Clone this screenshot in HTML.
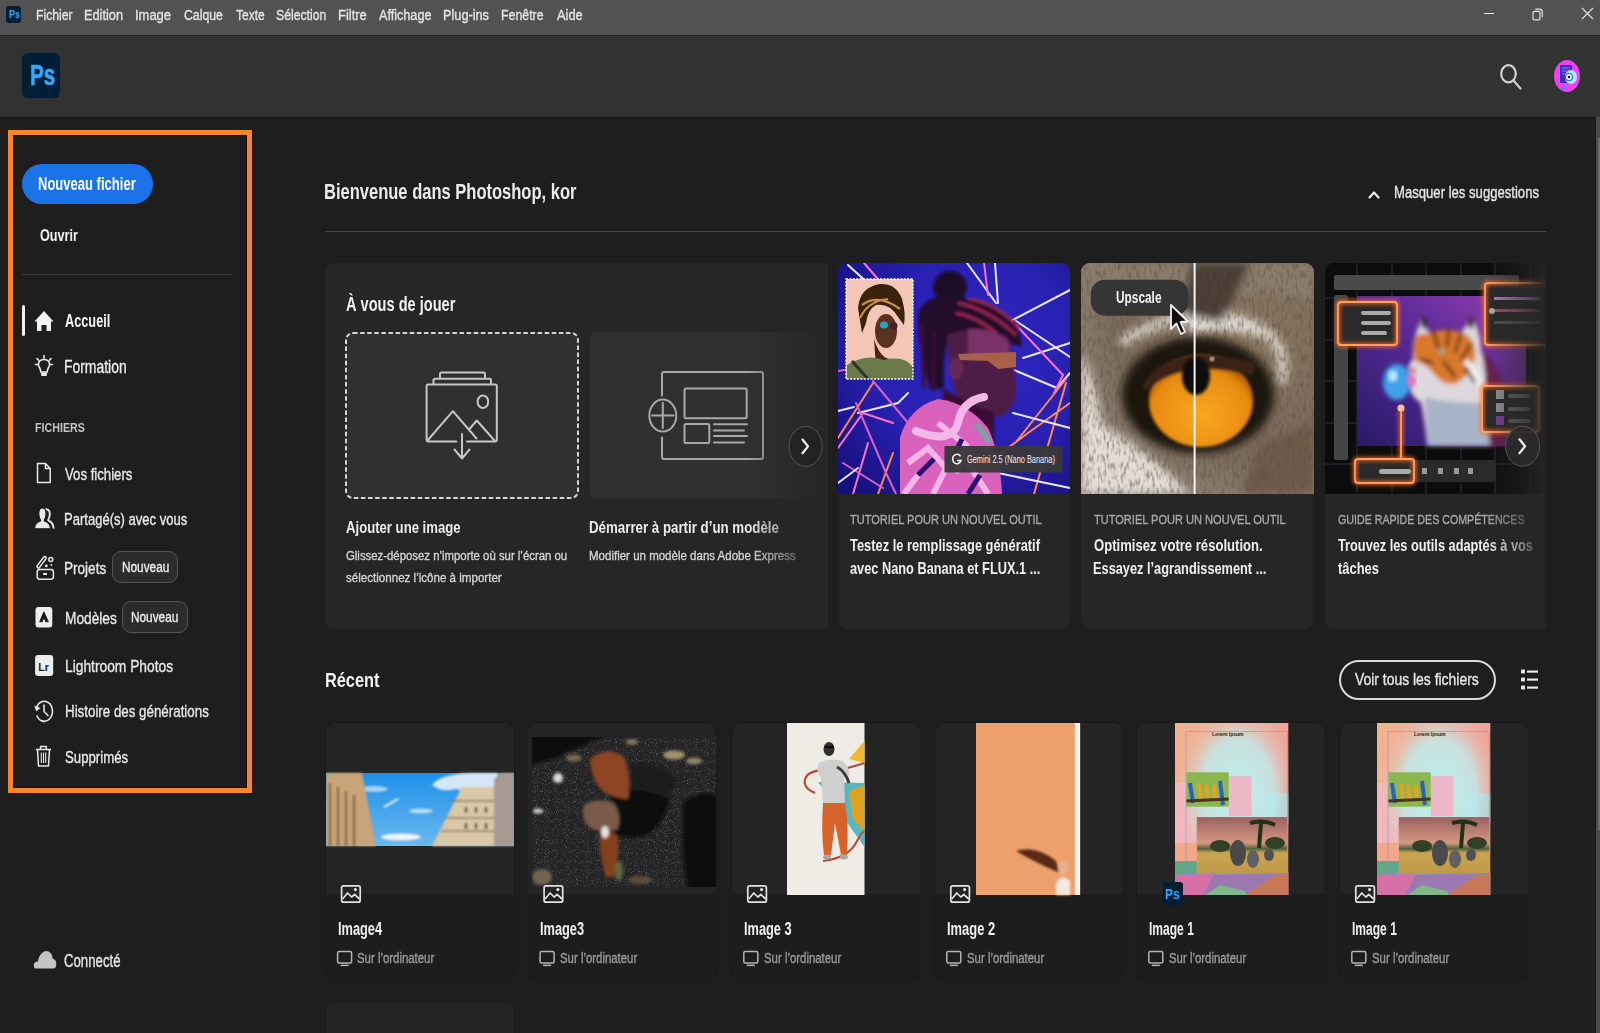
<!DOCTYPE html>
<html><head><meta charset="utf-8">
<style>
html,body{margin:0;padding:0;}
body{width:1600px;height:1033px;overflow:hidden;position:relative;background:#1e1e1e;font-family:"Liberation Sans",sans-serif;}
.a{position:absolute;}
.t{position:absolute;white-space:nowrap;line-height:1;transform-origin:0 0;}
svg{position:absolute;overflow:visible;}
</style></head><body>
<!-- title bar -->
<div class="a" style="left:0;top:0;width:1600px;height:35px;background:#525252"></div>
<div class="a" style="left:0;top:35px;width:1600px;height:1px;background:#232323"></div>
<!-- header -->
<div class="a" style="left:0;top:36px;width:1600px;height:81px;background:#323232"></div>
<div class="a" style="left:0;top:117px;width:1600px;height:1px;background:#1a1a1a"></div>
<!-- small ps icon -->
<div class="a" style="left:6px;top:6px;width:15px;height:17px;background:#001e36;border-radius:3px"></div>
<div class="a" style="left:8.6px;top:10px;font:bold 10px 'Liberation Sans';color:#31a8ff;line-height:1;transform:scaleX(.9);transform-origin:0 0">Ps</div>
<!-- window controls -->
<div class="a" style="left:1483.5px;top:13px;width:10.5px;height:1.2px;background:#e8e8e8"></div>
<svg style="left:0;top:0" width="1600" height="34"><g fill="none" stroke="#e0e0e0" stroke-width="1.2">
<rect x="1533" y="11.3" width="7" height="8.6" rx="1.3"/><path d="M1535.3 9.2 H1539.5 Q1542.3 9.2 1542.3 12 V17.2"/>
<path d="M1582 8 L1593 19 M1593 8 L1582 19"/></g></svg>
<!-- big ps logo -->
<div class="a" style="left:22px;top:53px;width:38px;height:45px;background:#001e36;border-radius:6px"></div>
<div class="a" style="left:29.5px;top:61px;font:bold 29px 'Liberation Sans';color:#31a8ff;line-height:1;transform:scaleX(.71);transform-origin:0 0;-webkit-text-stroke:.6px #31a8ff">Ps</div>
<!-- search -->
<svg style="left:0;top:0" width="1600" height="117"><g fill="none" stroke="#d2d2d2" stroke-width="2.2" stroke-linecap="round">
<ellipse cx="1508.5" cy="73.8" rx="7.3" ry="8.6"/><path d="M1513.5 80.5 L1520.5 88.5"/></g></svg>
<svg style="left:0;top:0" width="1600" height="117">
<ellipse cx="1567" cy="76" rx="13" ry="16" fill="#f040f0"/>
<rect x="1560" y="65" width="12" height="18" rx="1" fill="#3a30c0"/>
<g stroke="#8a80ff" stroke-width="1"><path d="M1562 68h8M1562 71h7M1562 74h6"/></g>
<ellipse cx="1571" cy="77" rx="6" ry="7" fill="#b0e8ff"/>
<ellipse cx="1569" cy="77" rx="3.5" ry="3.5" fill="#fff" stroke="#2a6ad0" stroke-width="1.2"/>
<circle cx="1569" cy="77" r="1.3" fill="#101040"/>
<path d="M1565 85 L1563 90" stroke="#3090ff" stroke-width="2.5"/>
</svg>
<!-- sidebar orange box -->
<div class="a" style="left:8px;top:130px;width:234px;height:653px;border:5px solid #f7862b;background:#1e1e1e;box-shadow:inset 0 0 0 1px #1a0c08"></div>
<div class="a" style="left:22px;top:164px;width:131px;height:40px;background:#1a73e8;border-radius:20px"></div>
<div class="a" style="left:22px;top:274px;width:210px;height:1px;background:#3b3b3b"></div>
<div class="a" style="left:22px;top:305px;width:3px;height:31px;background:#f0f0f0;border-radius:2px"></div>
<!-- badges -->
<div class="a" style="left:112px;top:551px;width:64px;height:31px;background:#2c2c2c;border:1px solid #555;border-radius:9px;box-sizing:border-box;width:66px;height:32px"></div>
<div class="a" style="left:122px;top:601px;width:66px;height:32px;background:#2c2c2c;border:1px solid #555;border-radius:9px;box-sizing:border-box"></div>
<svg style="left:0;top:0" width="260" height="1033">
<!-- home -->
<path d="M34.5 321.5 L44 311 L53.5 321.5 L51 321.5 L51 331 L46.5 331 L46.5 325 L41.5 325 L41.5 331 L37 331 L37 321.5 Z" fill="#f4f4f4"/>
<!-- bulb -->
<g fill="none" stroke="#ececec" stroke-width="1.6" stroke-linecap="round">
<path d="M44 355.5 v2.5 M37 358.5 l1.6 1.8 M51 358.5 l-1.6 1.8 M35.5 364.5 h2.5 M50 364.5 h2.5"/>
<path d="M40.8 372 Q40.5 369 39.5 367.5 Q38 365.5 38.5 363.5 Q39.5 359.5 44 359.5 Q48.5 359.5 49.5 363.5 Q50 365.5 48.5 367.5 Q47.5 369 47.2 372 Z"/>
</g>
<rect x="41" y="372.5" width="6" height="3.5" rx="1.2" fill="#ececec"/>
<!-- file -->
<path d="M37.5 463.5 H45.5 L50.2 468.5 V482.5 H37.5 Z M45.5 463.5 V468.5 H50.2" fill="none" stroke="#e8e8e8" stroke-width="1.5" stroke-linejoin="round"/>
<!-- people -->
<path d="M46 509.2 Q49.8 509.5 49.8 514 Q49.8 517.5 48.2 519.8 L48.4 520.6 Q53.2 522.5 53.5 527.8" fill="none" stroke="#e8e8e8" stroke-width="1.9" stroke-linecap="round"/>
<path d="M42.4 508 Q46 508 46 513.8 Q46 517.8 44.3 520 V521 Q50.3 522.3 50.4 528.8 H34.6 Q34.8 522.3 40.5 521 V520 Q38.8 517.8 38.8 513.8 Q38.8 508 42.4 508 Z" fill="#e8e8e8" stroke="#1e1e1e" stroke-width="1.1"/>
<!-- projets -->
<g fill="none" stroke="#e8e8e8" stroke-width="1.5" stroke-linejoin="round">
<rect x="37.2" y="569.6" width="16.2" height="9.6" rx="2.4"/>
<path d="M37.3 565.6 L43.6 557.2 Q44.6 556 45.7 556.9 Q46.6 557.8 45.8 559 L39.5 567.4 Q38.5 568.5 37.5 567.6 Q36.6 566.8 37.3 565.6 Z"/>
<circle cx="50.8" cy="559.5" r="2"/>
</g>
<rect x="43.1" y="573" width="3.9" height="2" fill="#e8e8e8"/>
<circle cx="46.3" cy="565.9" r="1.4" fill="#e8e8e8"/>
<circle cx="51.4" cy="565" r="0.9" fill="#e8e8e8"/>
<!-- modeles -->
<rect x="35.5" y="607.1" width="16.8" height="20.3" rx="3" fill="#ececec"/>
<path d="M39.6 621.8 L43.9 611.8 L48.4 621.8 L45.7 621.8 L43.9 617.4 L42.2 621.8 Z" fill="#141414" stroke="#141414" stroke-width="0.8" stroke-linejoin="round"/>
<!-- lr -->
<rect x="35.1" y="655.1" width="18.1" height="20.9" rx="3" fill="#ececec"/>
<text x="38.3" y="670.5" font-family="Liberation Sans" font-weight="bold" font-size="10.5" fill="#1a1a1a">Lr</text>
<!-- history -->
<g fill="none" stroke="#e8e8e8" stroke-width="1.6" stroke-linecap="round" stroke-linejoin="round">
<path d="M36.5 708 A8.2 10 0 1 1 37 716"/>
<path d="M44 705 V711.5 L48 715.5"/>
</g>
<path d="M34.2 705.5 L36.2 711.2 L40.5 708 Z" fill="#e8e8e8"/>
<!-- trash -->
<g fill="none" stroke="#e8e8e8" stroke-width="1.5" stroke-linejoin="round">
<path d="M35.8 749.5 H51.1 M40.5 749.5 V746.5 H46.4 V749.5"/>
<path d="M37.5 749.5 L38.5 766 H48.5 L49.5 749.5"/>
<path d="M41.3 752.5 V763 M43.5 752.5 V763 M45.7 752.5 V763" stroke-width="1.1"/>
</g>
<!-- cloud -->
<path d="M36 968.6 Q33.8 968.6 33.8 965.5 Q33.8 961.5 38 961.5 Q38.5 956 42 953 Q45 950.2 48.5 951.5 Q52.5 953.5 52.5 958.5 Q56.3 959.5 56.3 964 Q56.3 968.6 53 968.6 Z" fill="#c4c4c4"/>
</svg>
<!-- main header -->
<div class="a" style="left:325px;top:231px;width:1221px;height:1px;background:#444"></div>
<svg style="left:0;top:0" width="1600" height="300"><path d="M1369.5 197.5 L1374 192.5 L1378.5 197.5" fill="none" stroke="#eee" stroke-width="2.2" stroke-linecap="round" stroke-linejoin="round"/></svg>
<!-- cards row -->
<div class="a" style="left:325px;top:263px;width:503px;height:366px;background:#262626;border-radius:9px"></div>
<div class="a" style="left:345px;top:332px;width:234px;height:167px;background:#303030;border-radius:7px"></div>
<svg style="left:0;top:0" width="1600" height="600"><rect x="346" y="333" width="232" height="165" rx="7" fill="none" stroke="#d6d6d6" stroke-width="2" stroke-dasharray="4.5 2.6"/></svg>
<div class="a" style="left:590px;top:332px;width:237px;height:167px;background:#303030;border-radius:7px 0 0 7px"></div>
<svg style="left:0;top:0" width="1600" height="600">
<g fill="none" stroke="#c6c6c6" stroke-width="2" stroke-linecap="round" stroke-linejoin="round">
<path d="M440 377.5 V374 Q440 372.5 441.5 372.5 H483.5 Q485 372.5 485 374 V377.5"/>
<path d="M433.5 384 V380 Q433.5 378.7 435 378.7 H489.5 Q491 378.7 491 380 V384"/>
<path d="M456.4 441.4 H428 Q426.6 441.4 426.6 440 V386 Q426.6 384.6 428 384.6 H495.4 Q496.8 384.6 496.8 386 V440 Q496.8 441.4 495.4 441.4 H467"/>
<ellipse cx="482.9" cy="401.7" rx="5.3" ry="6.3"/>
<path d="M427.5 440.5 L452.9 411.2 L476.5 438.5 M469 429.5 L476.8 420.5 L494.5 440.5"/>
<path d="M462 434 V458.5 M454.5 449.5 L462 458.5 L469.5 449.5"/>
</g>
<g fill="none" stroke="#a8a8a8" stroke-width="2" stroke-linecap="round" stroke-linejoin="round">
<path d="M662 395.5 V374 Q662 372 664 372 H761 Q763 372 763 374 V457 Q763 459 761 459 H664 Q662 459 662 457 V437.5"/>
<ellipse cx="662.8" cy="415.6" rx="13.5" ry="16"/>
<path d="M662.8 403 V428 M652 415.6 H673.6"/>
<rect x="684.5" y="388.6" width="62.2" height="29.6" rx="1.5"/>
<rect x="684.5" y="424" width="24.8" height="19" rx="1.5"/>
<path d="M714 424.3 H747 M714 430.4 H744 M714 436.1 H747 M714 442.6 H744"/>
</g>
</svg>
<div class="a" style="left:838px;top:263px;width:232px;height:366px;background:#262626;border-radius:9px;overflow:hidden"><div class="a" style="left:0;top:0;width:240px;height:231px;overflow:hidden"><svg style="left:0;top:0" width="232" height="231" viewBox="0 0 232 231">
<defs>
<radialGradient id="bl1" cx="0.6" cy="0.4" r="0.8"><stop offset="0" stop-color="#3028c4"/><stop offset="0.55" stop-color="#2820b0"/><stop offset="1" stop-color="#16107a"/></radialGradient>
<filter id="b1" x="-10%" y="-10%" width="120%" height="120%"><feGaussianBlur stdDeviation="0.7"/></filter>
<filter id="b2" x="-20%" y="-20%" width="140%" height="140%"><feGaussianBlur stdDeviation="1.8"/></filter>
<clipPath id="c1"><rect width="232" height="231"/></clipPath>
</defs>
<g clip-path="url(#c1)">
<rect width="232" height="231" fill="url(#bl1)"/>
<g fill="none" stroke-width="2" stroke-linecap="round" filter="url(#b1)">
<path d="M10 2 L32 22 M129 0 L158 40 M157 0 L160 40 M169 60 L232 27 M178 58 L232 94 M176 107 L219 125 L232 110 M185 95 L232 80 M0 148 L16 144 M20 150 L60 140 L70 130" stroke="#eae6ff"/>
<path d="M26 0 L52 30 M146 0 L150 32 M178 62 L225 112 L216 130 M0 185 L25 150 L55 160 M15 231 L30 180" stroke="#ff70d0"/>
<path d="M178 179 L228 116 M196 231 L228 120 M150 200 L190 170 L232 140 M0 175 L35 120 M40 231 L55 190" stroke="#ff8a50"/>
<path d="M18 140 L48 210 L58 231 M35 118 L95 190 M0 108 L26 104 M5 200 L45 225" stroke="#d860c8"/>
<path d="M175 150 L232 165 M160 210 L232 225 M0 220 L20 205" stroke="#e8e4ff"/>
</g>
<!-- inset portrait -->
<rect x="8" y="16" width="67" height="100" fill="#f3c6b6"/>
<g filter="url(#b1)">
<path d="M20 45 Q22 24 42 21 Q58 20 64 36 Q68 50 66 62 L60 54 Q52 40 38 42 Q30 46 28 60 L24 70 Z" fill="#3a2410"/>
<path d="M24 42 Q40 30 62 46 M22 55 Q30 38 50 36" stroke="#c89040" stroke-width="2.2" fill="none"/>
<ellipse cx="48" cy="68" rx="11" ry="17" fill="#5a3020"/>
<path d="M36 76 Q42 95 52 96 L58 102 L38 104 Z" fill="#4a2818"/>
<path d="M9 116 L9 102 Q28 90 46 97 Q66 92 75 104 L75 116 Z" fill="#6a7a48"/>
<path d="M14 98 L30 116" stroke="#303028" stroke-width="3"/>
<ellipse cx="46" cy="62" rx="4" ry="3.6" fill="#20a8c0"/><ellipse cx="56" cy="63" rx="3.5" ry="3.4" fill="#402030"/>
</g>
<rect x="8" y="16" width="67" height="100" fill="none" stroke="#fff" stroke-width="1.4" stroke-dasharray="2 1.4"/>
<!-- main person -->
<g filter="url(#b2)">
<ellipse cx="112" cy="24" rx="17" ry="16" fill="#1e0828"/>
<path d="M80 50 Q90 30 115 34 Q150 36 175 60 Q185 72 183 84 L170 80 Q150 70 130 70 L112 72 Q104 90 106 125 L92 126 Q80 90 80 50 Z" fill="#24082c"/>
<path d="M120 40 Q150 46 178 72 M118 50 Q148 56 172 84 M130 36 Q160 40 182 66" stroke="#9a2850" stroke-width="3" fill="none"/>
<path d="M84 60 L86 125 M96 70 L95 128" stroke="#3a0c38" stroke-width="4"/>
<path d="M109 72 Q140 60 170 74 L176 100 L178 128 Q176 150 160 154 L130 150 Q112 135 109 72 Z" fill="#4e1a46"/>
<path d="M130 66 Q155 64 170 78 L172 95 L130 92 Z" fill="#7a3068"/>
<ellipse cx="118" cy="106" rx="7" ry="11" fill="#6a2858"/>
<path d="M104 125 Q130 140 156 150 L156 185 L110 185 Z" fill="#3a1034"/>
</g>
<g filter="url(#b1)">
<path d="M120 91 L178 89 L178 104 L160 106 L150 98 L122 97 Z" fill="#a86048"/>
<path d="M62 231 L62 175 Q70 145 100 136 Q130 140 150 165 Q162 190 164 231 Z" fill="#d862bc"/>
<path d="M70 200 L90 185 L108 205 L95 231 M100 160 L128 182 L118 210 M130 200 L150 231 M66 231 L80 212" stroke="#f8b6e8" stroke-width="6" fill="none"/>
<path d="M80 212 L96 196 M124 176 L114 196 M142 212 L130 231" stroke="#2a1070" stroke-width="5" fill="none"/>
<path d="M138 161 L152 179" stroke="#80a0a0" stroke-width="6"/>
<path d="M146 134 Q124 138 120 160 Q114 182 78 168" stroke="#f2b8e8" stroke-width="8" fill="none" stroke-linecap="round"/>
</g>
<!-- gemini badge -->
<rect x="106.5" y="183" width="118" height="26.5" fill="#383838" fill-opacity=".95"/>
<path d="M122.6 193.4 A4.3 4.8 0 1 0 123 197.6 L119.2 197.6" fill="none" stroke="#fff" stroke-width="1.5"/>
<text font-family="Liberation Sans" font-size="10" fill="#f0f0f0" transform="translate(129 200) scale(.74 1)">Gemini 2.5 (Nano Banana)</text>
</g>
</svg></div></div>
<div class="a" style="left:1081px;top:263px;width:233px;height:366px;background:#262626;border-radius:9px;overflow:hidden"><div class="a" style="left:0;top:0;width:240px;height:231px;overflow:hidden"><svg style="left:0;top:0" width="233" height="231" viewBox="0 0 233 231">
<defs>
<radialGradient id="fur" cx="0.7" cy="0.3" r="0.9"><stop offset="0" stop-color="#8a7660"/><stop offset="0.6" stop-color="#7a6a5a"/><stop offset="1" stop-color="#9a8e82"/></radialGradient>
<radialGradient id="iris" cx="0.5" cy="0.65" r="0.6"><stop offset="0" stop-color="#f8a820"/><stop offset="0.8" stop-color="#e88a10"/><stop offset="1" stop-color="#a05008"/></radialGradient>
<filter id="e1"><feGaussianBlur stdDeviation="4"/></filter>
<filter id="e2"><feGaussianBlur stdDeviation="1.5"/></filter>
<filter id="furn" x="0" y="0" width="100%" height="100%"><feTurbulence type="fractalNoise" baseFrequency="0.35 0.12" numOctaves="2" seed="7"/><feColorMatrix values="0 0 0 0 0.1  0 0 0 0 0.08  0 0 0 0 0.06  0 0 0 3 -1.4"/></filter>
</defs>
<rect width="233" height="231" fill="url(#fur)"/>
<g filter="url(#e1)">
<path d="M0 90 Q20 120 30 231 L0 231 Z" fill="#ddd6cc"/>
<path d="M0 150 Q60 180 110 231 L0 231 Z" fill="#e2dcd4"/>
<path d="M100 50 Q160 40 210 90 Q170 60 110 70 Z" fill="#e8e4e0"/>
<path d="M40 80 Q100 40 170 60 Q210 80 200 120" stroke="#d8d0c8" stroke-width="10" fill="none"/>
<path d="M0 0 L233 0 L233 40 Q150 20 80 40 L0 30 Z" fill="#8a7c6c"/>
<path d="M180 180 L233 160 L233 231 L160 231 Z" fill="#6e5a48"/>
<path d="M110 0 L170 0 L140 60 L100 50 Z" fill="#4a3e34"/>
</g>
<rect width="233" height="231" filter="url(#furn)" opacity=".5"/>
<ellipse cx="117" cy="132" rx="76" ry="58" fill="#1a1410" filter="url(#e1)"/>
<ellipse cx="120" cy="138" rx="52" ry="46" fill="url(#iris)" filter="url(#e2)"/>
<path d="M62 122 Q90 76 172 100 Q175 108 170 112 Q140 104 118 106 Q85 108 64 128 Z" fill="#3a2216" filter="url(#e2)"/>
<ellipse cx="115" cy="113" rx="14" ry="19" fill="#0a0808" filter="url(#e2)"/>
<circle cx="131" cy="96" r="2" fill="#fff" filter="url(#e2)"/>
<rect x="112.6" y="0" width="2" height="231" fill="#f4f4f4"/>
<rect x="9.8" y="16.7" width="97.6" height="36" rx="14" fill="#353535"/>
<path d="M90 42 L90 66 L95.5 60.5 L100 71 L104 69 L99.5 59 L107 58.5 Z" fill="#101010" stroke="#f4f4f4" stroke-width="1.8" stroke-linejoin="round"/>
</svg></div></div>
<div class="a" style="left:1325px;top:263px;width:221px;height:366px;background:#262626;border-radius:9px 0 0 9px;overflow:hidden"><div class="a" style="left:0;top:0;width:240px;height:231px;overflow:hidden"><svg style="left:0;top:0" width="221" height="231" viewBox="0 0 221 231">
<defs>
<linearGradient id="pur" x1="0" y1="1" x2="1" y2="0"><stop offset="0" stop-color="#281a68"/><stop offset="0.55" stop-color="#5a2a98"/><stop offset="1" stop-color="#9a40b0"/></linearGradient>
<filter id="t1"><feGaussianBlur stdDeviation="2"/></filter>
<filter id="glow" x="-30%" y="-30%" width="160%" height="160%"><feGaussianBlur stdDeviation="2.2"/></filter>
</defs>
<rect width="221" height="231" fill="#0c0c0c"/>
<g stroke="#2e2e3a" stroke-width="1">
<path d="M32 0V231 M67 0V231 M101 0V231 M136 0V231 M170 0V231 M205 0V231 M0 35H221 M0 77H221 M0 118H221 M0 160H221 M0 201H221"/>
</g>
<rect x="9" y="12" width="185" height="15" rx="2" fill="#4a4a4a"/>
<rect x="9" y="32" width="14" height="165" rx="2" fill="#454545"/>
<rect x="32" y="33" width="169" height="150" fill="url(#pur)"/>
<g filter="url(#t1)">
<path d="M140 80 Q172 90 180 130 L185 183 L150 183 Z" fill="#6a2050"/>
<path d="M96 57 L106 72 Q122 66 136 70 L147 55 Q156 68 156 88 Q162 110 160 135 L165 183 L102 183 Q100 160 96 140 Q84 132 82 118 Q80 104 88 96 Q86 80 96 57 Z" fill="#dcd8dc"/>
<path d="M92 72 L104 70 Q122 64 138 70 Q152 76 150 96 Q146 112 132 120 Q120 124 110 112 Q100 100 90 98 Q86 84 92 72 Z" fill="#d8782c"/>
<path d="M100 134 Q120 140 160 140 L165 183 L102 183 Z" fill="#a8b4c8"/>
<path d="M140 98 Q156 110 158 140" stroke="#f0f0f0" stroke-width="6" fill="none"/>
<path d="M108 68 L114 86 M124 65 L122 84 M136 70 L130 90 M146 80 L136 98 M118 98 L130 114 M140 104 L150 120 M96 96 L108 100" stroke="#141010" stroke-width="2.4"/>
<ellipse cx="99" cy="60" rx="3" ry="6" fill="#3a2a2a"/><ellipse cx="146" cy="60" rx="3" ry="6" fill="#3a2a2a"/>
<circle cx="116" cy="88" r="2.6" fill="#60c0a0"/>
<ellipse cx="87" cy="108" rx="4" ry="4" fill="#e07090"/>
</g>
<ellipse cx="72" cy="119" rx="14" ry="18" fill="#40a0e8" filter="url(#t1)"/>
<ellipse cx="68" cy="113" rx="5" ry="6" fill="#c0e8ff" filter="url(#t1)"/>
<ellipse cx="86" cy="118" rx="5" ry="6" fill="#e070c0" filter="url(#t1)"/>
<!-- panels -->
<rect x="14" y="40" width="57" height="41" rx="2" fill="#2a2a2a"/>
<rect x="160" y="22" width="61" height="60" rx="2" fill="#2a2a2a"/>
<rect x="158" y="124" width="55" height="44" rx="2" fill="#2a2a2a"/>
<rect x="31" y="197" width="140" height="22" rx="2" fill="#2a2a2a"/>
<g fill="#aaa"><rect x="36" y="48" width="30" height="4" rx="2"/><rect x="36" y="58" width="30" height="4" rx="2"/><rect x="36" y="68" width="26" height="4" rx="2"/>
<rect x="54" y="206" width="32" height="5" rx="2.5"/></g>
<g fill="#666"><rect x="169" y="34" width="46" height="3" fill="#b080c0"/><rect x="169" y="46" width="46" height="3" fill="#a05070"/><rect x="169" y="58" width="46" height="3" fill="#555"/>
<rect x="183" y="131" width="22" height="4" rx="2"/><rect x="183" y="144" width="22" height="4" rx="2"/><rect x="183" y="156" width="22" height="4" rx="2"/></g>
<g fill="#999"><rect x="171" y="127" width="8" height="9"/><rect x="171" y="140" width="8" height="9"/><rect x="171" y="153" width="8" height="9" fill="#8040a0"/>
<rect x="97" y="205" width="5" height="6"/><rect x="113" y="205" width="5" height="6"/><rect x="129" y="205" width="5" height="6"/><rect x="143" y="205" width="5" height="6"/></g>
<g fill="none" stroke="#ff6a20" stroke-width="4" filter="url(#glow)" opacity=".9">
<rect x="13" y="39" width="59" height="43" rx="3"/><rect x="160" y="20" width="70" height="62" rx="3"/><rect x="157" y="123" width="57" height="46" rx="3"/><rect x="30" y="196" width="59" height="24" rx="3"/>
<path d="M76 145 L76 196"/>
</g>
<g fill="none" stroke="#ffa060" stroke-width="1.8">
<rect x="13" y="39" width="59" height="43" rx="3"/><rect x="160" y="20" width="70" height="62" rx="3"/><rect x="157" y="123" width="57" height="46" rx="3"/><rect x="30" y="196" width="59" height="24" rx="3"/>
<path d="M76 145 L76 196"/>
</g>
<circle cx="76" cy="145" r="3.5" fill="#ffc0a0"/>
<circle cx="167" cy="48" r="3" fill="#b0b0b0"/>
</svg></div></div>
<!-- recent -->
<div class="a" style="left:1339px;top:660px;width:157px;height:40px;border:2px solid #dadada;border-radius:21px;box-sizing:border-box"></div>
<svg style="left:0;top:0" width="1600" height="1033"><g fill="#e8e8e8">
<rect x="1521" y="669.5" width="4" height="4" rx=".8"/><rect x="1527" y="670.5" width="11" height="2.2"/>
<rect x="1521" y="677.5" width="4" height="4" rx=".8"/><rect x="1527" y="678.5" width="11" height="2.2"/>
<rect x="1521" y="685.5" width="4" height="4" rx=".8"/><rect x="1527" y="686.5" width="11" height="2.2"/></g></svg>
<div class="a" style="left:325.6px;top:722.5px;width:188px;height:257px;border-radius:9px;overflow:hidden;background:#1d1d1d;box-shadow:0 0 0 1px #1a1a1a"><div class="a" style="left:0;top:0;width:188px;height:171.5px;background:#242424"></div><svg style="left:0;top:50.3px" width="188" height="73" viewBox="0 0 188 73" preserveAspectRatio="none">
<defs><linearGradient id="sky" x1="0" y1="0" x2="0" y2="1"><stop offset="0" stop-color="#1e90e8"/><stop offset="1" stop-color="#6ab8ee"/></linearGradient>
<filter id="sb"><feGaussianBlur stdDeviation="1"/></filter></defs>
<rect width="188" height="73" fill="url(#sky)"/>
<g filter="url(#sb)">
<path d="M106 12 Q115 0 150 0 L172 0 L168 18 Q150 22 130 16 Q115 20 106 12 Z" fill="#e8f0f8" opacity=".9"/>
<ellipse cx="75" cy="64" rx="20" ry="3.5" fill="#f0f4f8"/>
<ellipse cx="48" cy="16" rx="14" ry="3" fill="#c8e0f4" opacity=".8"/>
<path d="M58 34 L72 26" stroke="#fff" stroke-width="2"/>
<ellipse cx="95" cy="38" rx="12" ry="2.5" fill="#d0e8f8" opacity=".8"/>
<path d="M0 0 H36 L40 20 L50 73 H0 Z" fill="#c8a478"/>
<path d="M4 10 V73 M12 14 V73 M20 18 V73 M28 22 V73" stroke="#8a6a48" stroke-width="2.5"/>
<path d="M106 73 L136 14 H175 V73 Z" fill="#dac8a6"/>
<path d="M125 28 H172 M120 45 H172 M115 58 H172" stroke="#8a7a60" stroke-width="1.5"/>
<path d="M140 34 V40 M150 34 V40 M160 34 V40 M140 50 V56 M150 50 V56 M160 50 V56" stroke="#605040" stroke-width="2.5"/>
<path d="M168 6 L175 0 H188 V73 H168 Z" fill="#a89a92"/>
</g></svg></div><svg style="left:0;top:0" width="1600" height="1033"><g fill="none" stroke="#e2e2e2" stroke-width="1.7" stroke-linejoin="round">
<rect x="341.6" y="885.8" width="18.6" height="16.4" rx="2"/><path d="M342.6 899 L347.6 893 L351.6 897 L354.6 894.5 L359.6 899"/></g>
<circle cx="355.4" cy="889.6" r="1.6" fill="#e2e2e2"/></svg><svg style="left:0;top:0" width="1600" height="1033"><g fill="none" stroke="#b4b4b4" stroke-width="1.5">
<rect x="337.6" y="951.5" width="14" height="11.5" rx="1.5"/></g><rect x="340.6" y="964.6" width="8" height="1.5" fill="#b4b4b4"/></svg><div class="a" style="left:528.1px;top:722.5px;width:188px;height:257px;border-radius:9px;overflow:hidden;background:#1d1d1d;box-shadow:0 0 0 1px #1a1a1a"><div class="a" style="left:0;top:0;width:188px;height:171.5px;background:#242424"></div><svg style="left:3.9px;top:14.5px" width="185" height="150" viewBox="0 0 185 150" preserveAspectRatio="none">
<defs><filter id="qb" x="-20%" y="-20%" width="140%" height="140%"><feGaussianBlur stdDeviation="1.5"/></filter>
<filter id="noise" x="0" y="0" width="100%" height="100%"><feTurbulence type="fractalNoise" baseFrequency="0.9" numOctaves="1" seed="3"/><feColorMatrix values="0 0 0 0 1  0 0 0 0 1  0 0 0 0 1  0 0 0 2.2 -1.25"/></filter>
<clipPath id="qc"><rect width="185" height="150"/></clipPath></defs>
<g clip-path="url(#qc)">
<rect width="185" height="150" fill="#242426"/>
<rect width="185" height="150" filter="url(#noise)" opacity=".6"/>
<g filter="url(#qb)">
<path d="M-5 -5 H80 Q50 10 20 22 L-5 30 Z" fill="#0c0c0e"/>
<path d="M152 64 Q175 50 190 62 V155 H156 Q148 110 152 64 Z" fill="#0c0c0c"/>
<path d="M98 26 Q130 24 146 42 Q140 60 128 66 L100 60 Z" fill="#18181a" opacity=".8"/>
<path d="M80 54 Q110 50 138 62 Q134 82 118 96 Q100 104 84 98 Q78 76 80 54 Z" fill="#0e0e10"/>
<path d="M58 22 Q75 8 92 20 Q100 40 96 62 Q85 62 72 55 Q60 45 58 22 Z" fill="#8e4424"/>
<path d="M52 68 Q65 60 82 66 Q90 78 86 92 Q76 96 60 92 Q48 84 52 68 Z" fill="#7a5a48"/>
<path d="M68 92 Q78 92 86 100 Q88 120 82 140 L74 140 Q66 115 68 92 Z" fill="#84401e"/>
<ellipse cx="73" cy="95" rx="4" ry="6" fill="#e8e4e0"/>
<ellipse cx="142" cy="18" rx="11" ry="4.5" fill="#b8a478" opacity=".85"/><ellipse cx="162" cy="24" rx="8" ry="3.5" fill="#a89a78" opacity=".8"/>
<ellipse cx="42" cy="21" rx="8" ry="3.5" fill="#8a7a58" opacity=".8"/>
<ellipse cx="10" cy="140" rx="10" ry="8" fill="#7a6e58" opacity=".85"/>
<ellipse cx="108" cy="143" rx="12" ry="4" fill="#5a4e3c"/>
<ellipse cx="87" cy="134" rx="4" ry="10" fill="#5a6a40"/>
<ellipse cx="26" cy="41" rx="5" ry="5" fill="#d8d8d8"/>
<ellipse cx="6" cy="74" rx="5" ry="2.5" fill="#d0d0d0"/>
<ellipse cx="100" cy="5" rx="6" ry="3" fill="#a08a60" opacity=".8"/>
</g></g></svg></div><svg style="left:0;top:0" width="1600" height="1033"><g fill="none" stroke="#e2e2e2" stroke-width="1.7" stroke-linejoin="round">
<rect x="544.1" y="885.8" width="18.6" height="16.4" rx="2"/><path d="M545.1 899 L550.1 893 L554.1 897 L557.1 894.5 L562.1 899"/></g>
<circle cx="557.9" cy="889.6" r="1.6" fill="#e2e2e2"/></svg><svg style="left:0;top:0" width="1600" height="1033"><g fill="none" stroke="#b4b4b4" stroke-width="1.5">
<rect x="540.1" y="951.5" width="14" height="11.5" rx="1.5"/></g><rect x="543.1" y="964.6" width="8" height="1.5" fill="#b4b4b4"/></svg><div class="a" style="left:731.8px;top:722.5px;width:188px;height:257px;border-radius:9px;overflow:hidden;background:#1d1d1d;box-shadow:0 0 0 1px #1a1a1a"><div class="a" style="left:0;top:0;width:188px;height:171.5px;background:#242424"></div><svg style="left:55.5px;top:0" width="77.5" height="172" viewBox="0 0 77.5 172" preserveAspectRatio="none">
<defs><filter id="mb" x="-20%" y="-20%" width="140%" height="140%"><feGaussianBlur stdDeviation="0.6"/></filter></defs>
<rect width="77.5" height="172" fill="#efece6"/>
<g filter="url(#mb)">
<path d="M62 36 L77.5 18 V40 Z" fill="#f0b830"/>
<path d="M31 59 L77.5 60 V124 Z" fill="#58b8c0"/>
<path d="M62 68 L77.5 62 V108 L66 96 Z" fill="#e0a020"/>
<path d="M44 47 Q24 46 19 54 Q14 64 28 70" stroke="#b84838" stroke-width="2.2" fill="none"/>
<path d="M52 47 Q62 45 77.5 40" stroke="#b84838" stroke-width="2.2" fill="none"/>
<path d="M36 138 Q62 135 70 118 Q74 110 77.5 108" stroke="#b84838" stroke-width="2" fill="none"/>
<ellipse cx="42" cy="26" rx="5.5" ry="7" fill="#2e2e2e"/>
<path d="M38 24 H47" stroke="#111" stroke-width="2"/>
<path d="M32 40 Q42 34 56 38 Q64 46 62 54 L57 52 L58 80 H36 L34 54 Q28 48 32 40 Z" fill="#cfcfcf"/>
<path d="M50 44 Q58 48 62 60" stroke="#3a3a3a" stroke-width="3" fill="none"/>
<path d="M36 80 H58 Q62 100 60 132 H54 L48 100 L44 132 H37 Q34 110 36 80 Z" fill="#d8642a"/>
<ellipse cx="40" cy="134" rx="4" ry="2.5" fill="#a8a8a8"/><ellipse cx="57" cy="134" rx="4" ry="2.5" fill="#a8a8a8"/>
</g></svg></div><svg style="left:0;top:0" width="1600" height="1033"><g fill="none" stroke="#e2e2e2" stroke-width="1.7" stroke-linejoin="round">
<rect x="747.8" y="885.8" width="18.6" height="16.4" rx="2"/><path d="M748.8 899 L753.8 893 L757.8 897 L760.8 894.5 L765.8 899"/></g>
<circle cx="761.6" cy="889.6" r="1.6" fill="#e2e2e2"/></svg><svg style="left:0;top:0" width="1600" height="1033"><g fill="none" stroke="#b4b4b4" stroke-width="1.5">
<rect x="743.8" y="951.5" width="14" height="11.5" rx="1.5"/></g><rect x="746.8" y="964.6" width="8" height="1.5" fill="#b4b4b4"/></svg><div class="a" style="left:934.8px;top:722.5px;width:188px;height:257px;border-radius:9px;overflow:hidden;background:#1d1d1d;box-shadow:0 0 0 1px #1a1a1a"><div class="a" style="left:0;top:0;width:188px;height:171.5px;background:#242424"></div><svg style="left:41.4px;top:0" width="104.1" height="172" viewBox="0 0 104.1 172" preserveAspectRatio="none">
<defs><filter id="ob"><feGaussianBlur stdDeviation="1"/></filter></defs>
<rect width="104.1" height="172" fill="#eea06c"/>
<rect x="98.8" width="5.3" height="172" fill="#f8f4f0"/>
<g filter="url(#ob)">
<path d="M40 128 Q60 122 80 138 L84 150 Q60 140 40 128 Z" fill="#5a2a18"/>
<ellipse cx="87" cy="145" rx="5" ry="7" fill="#e8b090"/>
<path d="M80 160 Q86 150 94 158 L94 172 H80 Z" fill="#f4e8e0"/>
</g></svg></div><svg style="left:0;top:0" width="1600" height="1033"><g fill="none" stroke="#e2e2e2" stroke-width="1.7" stroke-linejoin="round">
<rect x="950.8" y="885.8" width="18.6" height="16.4" rx="2"/><path d="M951.8 899 L956.8 893 L960.8 897 L963.8 894.5 L968.8 899"/></g>
<circle cx="964.6" cy="889.6" r="1.6" fill="#e2e2e2"/></svg><svg style="left:0;top:0" width="1600" height="1033"><g fill="none" stroke="#b4b4b4" stroke-width="1.5">
<rect x="946.8" y="951.5" width="14" height="11.5" rx="1.5"/></g><rect x="949.8" y="964.6" width="8" height="1.5" fill="#b4b4b4"/></svg><div class="a" style="left:1136.8px;top:722.5px;width:188px;height:257px;border-radius:9px;overflow:hidden;background:#1d1d1d;box-shadow:0 0 0 1px #1a1a1a"><div class="a" style="left:0;top:0;width:188px;height:171.5px;background:#242424"></div><svg style="left:37.9px;top:0" width="113.3" height="172" viewBox="0 0 113.3 172" preserveAspectRatio="none">
<defs><linearGradient id="cg379" x1="0" y1="0" x2="1" y2="0.6"><stop offset="0" stop-color="#f2b48c"/><stop offset="0.6" stop-color="#f0a8a0"/><stop offset="1" stop-color="#f09a90"/></linearGradient>
<radialGradient id="cr379" cx="0.55" cy="0.42" r="0.55"><stop offset="0" stop-color="#b8f4f0"/><stop offset="0.6" stop-color="#c0ecec" stop-opacity=".8"/><stop offset="1" stop-color="#f0b8a0" stop-opacity="0"/></radialGradient>
<linearGradient id="ce379" x1="0" y1="0" x2="0" y2="1"><stop offset="0" stop-color="#9a6060"/><stop offset="0.45" stop-color="#d49880"/><stop offset="0.55" stop-color="#506040"/><stop offset="0.62" stop-color="#c8a450"/><stop offset="1" stop-color="#c09848"/></linearGradient>
<filter id="cb379" x="-10%" y="-10%" width="120%" height="120%"><feGaussianBlur stdDeviation="0.7"/></filter></defs>
<rect width="113.3" height="172" fill="url(#cg379)"/>
<rect x="88" y="70" width="25.3" height="30" fill="#90e0f0" opacity=".8"/>
<rect x="0" y="60" width="20" height="60" fill="#f4b8c8" opacity=".8"/>
<rect width="113.3" height="172" fill="url(#cr379)"/>
<rect x="53.7" y="53.2" width="22.7" height="40" fill="#f2b0c4" opacity=".9"/>
<g filter="url(#cb379)">
<rect x="11.3" y="49.3" width="42.4" height="34.4" fill="#8ab850"/>
<path d="M15 60 L18 80 M45 58 L48 82" stroke="#2a60c0" stroke-width="4"/>
<path d="M24 60 L26 76 M31 62 L33 78 M39 62 L40 77" stroke="#e8a020" stroke-width="4"/>
<path d="M11.3 78 L53.7 76" stroke="#4a3020" stroke-width="3"/>
<rect x="21.8" y="94.1" width="90.6" height="57.6" fill="url(#ce379)"/>
<path d="M75 100 Q88 96 100 102 M86 100 L84 125" stroke="#203018" stroke-width="4" fill="none"/>
<ellipse cx="45" cy="123" rx="10" ry="6" fill="#304028"/>
<ellipse cx="100" cy="120" rx="10" ry="6" fill="#304028"/>
<ellipse cx="63" cy="130" rx="8" ry="13" fill="#48484c"/>
<ellipse cx="78" cy="136" rx="6" ry="9" fill="#606064"/>
<ellipse cx="94" cy="132" rx="5" ry="6" fill="#505054"/>
<rect x="0" y="120" width="21.8" height="18" fill="#f0a888"/>
<rect x="0" y="138" width="21.8" height="16" fill="#60a888"/>
<path d="M0 152 L113.3 150 V172 H0 Z" fill="#9a78b0"/>
<path d="M0 152 L40 150 L28 172 H0 Z" fill="#d870a8"/>
<path d="M70 172 L100 152 L113.3 150 V172 Z" fill="#c87858"/>
<path d="M30 172 L45 162 L70 168 L72 172 Z" fill="#80b888"/>
</g>
<text x="37" y="12.8" font-family="Liberation Sans" font-weight="bold" font-size="5.6" fill="#222" transform="translate(37 0) scale(.9 1) translate(-37 0)">Lorem Ipsum</text>
<rect x="11" y="8.7" width="101.5" height="143" fill="none" stroke="#9090c8" stroke-width=".6"/>
</svg></div><div class="a" style="left:1163.4px;top:882.2px;width:20px;height:23px;background:#001e36;border-radius:3px"></div><div class="t" style="left:1165.4px;top:886.5px;font-size:14px;font-weight:bold;color:#31a8ff;transform:scaleX(.85)">Ps</div><svg style="left:0;top:0" width="1600" height="1033"><g fill="none" stroke="#b4b4b4" stroke-width="1.5">
<rect x="1148.8" y="951.5" width="14" height="11.5" rx="1.5"/></g><rect x="1151.8" y="964.6" width="8" height="1.5" fill="#b4b4b4"/></svg><div class="a" style="left:1339.8px;top:722.5px;width:188px;height:257px;border-radius:9px;overflow:hidden;background:#1d1d1d;box-shadow:0 0 0 1px #1a1a1a"><div class="a" style="left:0;top:0;width:188px;height:171.5px;background:#242424"></div><svg style="left:37.1px;top:0" width="113.3" height="172" viewBox="0 0 113.3 172" preserveAspectRatio="none">
<defs><linearGradient id="cg371" x1="0" y1="0" x2="1" y2="0.6"><stop offset="0" stop-color="#f2b48c"/><stop offset="0.6" stop-color="#f0a8a0"/><stop offset="1" stop-color="#f09a90"/></linearGradient>
<radialGradient id="cr371" cx="0.55" cy="0.42" r="0.55"><stop offset="0" stop-color="#b8f4f0"/><stop offset="0.6" stop-color="#c0ecec" stop-opacity=".8"/><stop offset="1" stop-color="#f0b8a0" stop-opacity="0"/></radialGradient>
<linearGradient id="ce371" x1="0" y1="0" x2="0" y2="1"><stop offset="0" stop-color="#9a6060"/><stop offset="0.45" stop-color="#d49880"/><stop offset="0.55" stop-color="#506040"/><stop offset="0.62" stop-color="#c8a450"/><stop offset="1" stop-color="#c09848"/></linearGradient>
<filter id="cb371" x="-10%" y="-10%" width="120%" height="120%"><feGaussianBlur stdDeviation="0.7"/></filter></defs>
<rect width="113.3" height="172" fill="url(#cg371)"/>
<rect x="88" y="70" width="25.3" height="30" fill="#90e0f0" opacity=".8"/>
<rect x="0" y="60" width="20" height="60" fill="#f4b8c8" opacity=".8"/>
<rect width="113.3" height="172" fill="url(#cr371)"/>
<rect x="53.7" y="53.2" width="22.7" height="40" fill="#f2b0c4" opacity=".9"/>
<g filter="url(#cb371)">
<rect x="11.3" y="49.3" width="42.4" height="34.4" fill="#8ab850"/>
<path d="M15 60 L18 80 M45 58 L48 82" stroke="#2a60c0" stroke-width="4"/>
<path d="M24 60 L26 76 M31 62 L33 78 M39 62 L40 77" stroke="#e8a020" stroke-width="4"/>
<path d="M11.3 78 L53.7 76" stroke="#4a3020" stroke-width="3"/>
<rect x="21.8" y="94.1" width="90.6" height="57.6" fill="url(#ce371)"/>
<path d="M75 100 Q88 96 100 102 M86 100 L84 125" stroke="#203018" stroke-width="4" fill="none"/>
<ellipse cx="45" cy="123" rx="10" ry="6" fill="#304028"/>
<ellipse cx="100" cy="120" rx="10" ry="6" fill="#304028"/>
<ellipse cx="63" cy="130" rx="8" ry="13" fill="#48484c"/>
<ellipse cx="78" cy="136" rx="6" ry="9" fill="#606064"/>
<ellipse cx="94" cy="132" rx="5" ry="6" fill="#505054"/>
<rect x="0" y="120" width="21.8" height="18" fill="#f0a888"/>
<rect x="0" y="138" width="21.8" height="16" fill="#60a888"/>
<path d="M0 152 L113.3 150 V172 H0 Z" fill="#9a78b0"/>
<path d="M0 152 L40 150 L28 172 H0 Z" fill="#d870a8"/>
<path d="M70 172 L100 152 L113.3 150 V172 Z" fill="#c87858"/>
<path d="M30 172 L45 162 L70 168 L72 172 Z" fill="#80b888"/>
</g>
<text x="37" y="12.8" font-family="Liberation Sans" font-weight="bold" font-size="5.6" fill="#222" transform="translate(37 0) scale(.9 1) translate(-37 0)">Lorem Ipsum</text>
<rect x="11" y="8.7" width="101.5" height="143" fill="none" stroke="#9090c8" stroke-width=".6"/>
</svg></div><svg style="left:0;top:0" width="1600" height="1033"><g fill="none" stroke="#e2e2e2" stroke-width="1.7" stroke-linejoin="round">
<rect x="1355.8" y="885.8" width="18.6" height="16.4" rx="2"/><path d="M1356.8 899 L1361.8 893 L1365.8 897 L1368.8 894.5 L1373.8 899"/></g>
<circle cx="1369.6" cy="889.6" r="1.6" fill="#e2e2e2"/></svg><svg style="left:0;top:0" width="1600" height="1033"><g fill="none" stroke="#b4b4b4" stroke-width="1.5">
<rect x="1351.8" y="951.5" width="14" height="11.5" rx="1.5"/></g><rect x="1354.8" y="964.6" width="8" height="1.5" fill="#b4b4b4"/></svg>
<div class="a" style="left:326px;top:1002px;width:188px;height:40px;background:#232323;border-radius:8px;box-shadow:0 0 0 1px #191919"></div>
<!-- scrollbar -->
<div class="a" style="left:1595px;top:117px;width:1px;height:916px;background:#181818"></div><div class="a" style="left:1596px;top:117px;width:4px;height:916px;background:#4a4a4a"></div><div class="a" style="left:1598px;top:138px;width:2px;height:692px;background:#6c6c6c"></div>
<div class="t" style="left:36.11px;top:6.82px;font-size:15.36px;font-weight:normal;color:#e4e4e4;transform:scaleX(0.7916);-webkit-text-stroke:.35px #e4e4e4">Fichier</div>
<div class="t" style="left:84.47px;top:6.82px;font-size:15.36px;font-weight:normal;color:#e4e4e4;transform:scaleX(0.8300);-webkit-text-stroke:.35px #e4e4e4">Edition</div>
<div class="t" style="left:135.46px;top:6.82px;font-size:15.36px;font-weight:normal;color:#e4e4e4;transform:scaleX(0.8433);-webkit-text-stroke:.35px #e4e4e4">Image</div>
<div class="t" style="left:183.50px;top:6.82px;font-size:15.36px;font-weight:normal;color:#e4e4e4;transform:scaleX(0.7999);-webkit-text-stroke:.35px #e4e4e4">Calque</div>
<div class="t" style="left:235.60px;top:6.82px;font-size:15.36px;font-weight:normal;color:#e4e4e4;transform:scaleX(0.7797);-webkit-text-stroke:.35px #e4e4e4">Texte</div>
<div class="t" style="left:276.20px;top:6.82px;font-size:15.36px;font-weight:normal;color:#e4e4e4;transform:scaleX(0.7950);-webkit-text-stroke:.35px #e4e4e4">Sélection</div>
<div class="t" style="left:338.16px;top:6.82px;font-size:15.36px;font-weight:normal;color:#e4e4e4;transform:scaleX(0.8438);-webkit-text-stroke:.35px #e4e4e4">Filtre</div>
<div class="t" style="left:379.30px;top:6.82px;font-size:15.36px;font-weight:normal;color:#e4e4e4;transform:scaleX(0.8225);-webkit-text-stroke:.35px #e4e4e4">Affichage</div>
<div class="t" style="left:443.47px;top:6.82px;font-size:15.36px;font-weight:normal;color:#e4e4e4;transform:scaleX(0.8283);-webkit-text-stroke:.35px #e4e4e4">Plug-ins</div>
<div class="t" style="left:501.20px;top:6.82px;font-size:15.36px;font-weight:normal;color:#e4e4e4;transform:scaleX(0.8036);-webkit-text-stroke:.35px #e4e4e4">Fenêtre</div>
<div class="t" style="left:556.70px;top:6.82px;font-size:15.36px;font-weight:normal;color:#e4e4e4;transform:scaleX(0.8345);-webkit-text-stroke:.35px #e4e4e4">Aide</div>
<div class="t" style="left:37.96px;top:176.25px;font-size:17.5px;font-weight:bold;color:#ffffff;transform:scaleX(0.7442)">Nouveau fichier</div>
<div class="t" style="left:39.80px;top:226.97px;font-size:17.07px;font-weight:bold;color:#f2f2f2;transform:scaleX(0.7408)">Ouvrir</div>
<div class="t" style="left:64.50px;top:311.71px;font-size:18.78px;font-weight:bold;color:#f4f4f4;transform:scaleX(0.6790)">Accueil</div>
<div class="t" style="left:64.24px;top:358.19px;font-size:18.21px;font-weight:normal;color:#ececec;transform:scaleX(0.7648);-webkit-text-stroke:.35px #ececec">Formation</div>
<div class="t" style="left:34.80px;top:420.58px;font-size:13.23px;font-weight:bold;color:#c4c4c4;transform:scaleX(0.8081)">FICHIERS</div>
<div class="t" style="left:65.00px;top:465.76px;font-size:17.07px;font-weight:normal;color:#e8e8e8;transform:scaleX(0.7727);-webkit-text-stroke:.35px #e8e8e8">Vos fichiers</div>
<div class="t" style="left:64.24px;top:511.46px;font-size:17.07px;font-weight:normal;color:#e8e8e8;transform:scaleX(0.7640);-webkit-text-stroke:.35px #e8e8e8">Partagé(s) avec vous</div>
<div class="t" style="left:64.21px;top:559.57px;font-size:17.07px;font-weight:normal;color:#e8e8e8;transform:scaleX(0.7950);-webkit-text-stroke:.35px #e8e8e8">Projets</div>
<div class="t" style="left:121.75px;top:560.63px;font-size:13.94px;font-weight:normal;color:#ececec;transform:scaleX(0.8475);-webkit-text-stroke:.35px #ececec">Nouveau</div>
<div class="t" style="left:64.60px;top:609.67px;font-size:17.07px;font-weight:normal;color:#e8e8e8;transform:scaleX(0.8037);-webkit-text-stroke:.35px #e8e8e8">Modèles</div>
<div class="t" style="left:131.35px;top:610.63px;font-size:13.94px;font-weight:normal;color:#ececec;transform:scaleX(0.8475);-webkit-text-stroke:.35px #ececec">Nouveau</div>
<div class="t" style="left:64.59px;top:657.67px;font-size:17.07px;font-weight:normal;color:#e8e8e8;transform:scaleX(0.8079);-webkit-text-stroke:.35px #e8e8e8">Lightroom Photos</div>
<div class="t" style="left:64.62px;top:702.97px;font-size:17.07px;font-weight:normal;color:#e8e8e8;transform:scaleX(0.7815);-webkit-text-stroke:.35px #e8e8e8">Histoire des générations</div>
<div class="t" style="left:65.40px;top:749.07px;font-size:17.07px;font-weight:normal;color:#e8e8e8;transform:scaleX(0.7738);-webkit-text-stroke:.35px #e8e8e8">Supprimés</div>
<div class="t" style="left:64.20px;top:952.25px;font-size:18.49px;font-weight:normal;color:#e4e4e4;transform:scaleX(0.7140);-webkit-text-stroke:.35px #e4e4e4">Connecté</div>
<div class="t" style="left:324.43px;top:182.13px;font-size:21.34px;font-weight:bold;color:#ebebeb;transform:scaleX(0.7745)">Bienvenue dans Photoshop, kor</div>
<div class="t" style="left:1393.96px;top:184.25px;font-size:16.5px;font-weight:normal;color:#e6e6e6;transform:scaleX(0.7944);-webkit-text-stroke:.35px #e6e6e6">Masquer les suggestions</div>
<div class="t" style="left:345.50px;top:295.05px;font-size:19.91px;font-weight:bold;color:#f0f0f0;transform:scaleX(0.7321)">À vous de jouer</div>
<div class="t" style="left:345.50px;top:518.52px;font-size:16.36px;font-weight:bold;color:#ececec;transform:scaleX(0.8029)">Ajouter une image</div>
<div class="t" style="left:345.50px;top:548.52px;font-size:13.37px;font-weight:normal;color:#d4d4d4;transform:scaleX(0.8508);-webkit-text-stroke:.35px #d4d4d4">Glissez-déposez n’importe où sur l’écran ou</div>
<div class="t" style="left:345.50px;top:571.02px;font-size:13.37px;font-weight:normal;color:#d4d4d4;transform:scaleX(0.8666);-webkit-text-stroke:.35px #d4d4d4">sélectionnez l’icône à importer</div>
<div class="t" style="left:588.89px;top:518.52px;font-size:16.36px;font-weight:bold;color:#ececec;transform:scaleX(0.8129)">Démarrer à partir d’un modèle</div>
<div class="t" style="left:588.84px;top:548.52px;font-size:13.37px;font-weight:normal;color:#d4d4d4;transform:scaleX(0.8615);-webkit-text-stroke:.35px #d4d4d4">Modifier un modèle dans Adobe Express</div>
<div class="t" style="left:850.30px;top:512.87px;font-size:13.66px;font-weight:normal;color:#a8a8a8;transform:scaleX(0.8091);-webkit-text-stroke:.35px #a8a8a8">TUTORIEL POUR UN NOUVEL OUTIL</div>
<div class="t" style="left:850.30px;top:536.83px;font-size:17.35px;font-weight:bold;color:#f0f0f0;transform:scaleX(0.7417)">Testez le remplissage génératif</div>
<div class="t" style="left:850.30px;top:559.53px;font-size:17.35px;font-weight:bold;color:#f0f0f0;transform:scaleX(0.7367)">avec Nano Banana et FLUX.1 ...</div>
<div class="t" style="left:1094.00px;top:512.87px;font-size:13.66px;font-weight:normal;color:#a8a8a8;transform:scaleX(0.8091);-webkit-text-stroke:.35px #a8a8a8">TUTORIEL POUR UN NOUVEL OUTIL</div>
<div class="t" style="left:1094.00px;top:536.83px;font-size:17.35px;font-weight:bold;color:#f0f0f0;transform:scaleX(0.7542)">Optimisez votre résolution.</div>
<div class="t" style="left:1093.26px;top:559.53px;font-size:17.35px;font-weight:bold;color:#f0f0f0;transform:scaleX(0.7369)">Essayez l’agrandissement ...</div>
<div class="t" style="left:1337.60px;top:512.87px;font-size:13.66px;font-weight:normal;color:#a8a8a8;transform:scaleX(0.7802);-webkit-text-stroke:.35px #a8a8a8">GUIDE RAPIDE DES COMPÉTENCES</div>
<div class="t" style="left:1337.60px;top:536.83px;font-size:17.35px;font-weight:bold;color:#f0f0f0;transform:scaleX(0.7352)">Trouvez les outils adaptés à vos</div>
<div class="t" style="left:1337.60px;top:559.53px;font-size:17.35px;font-weight:bold;color:#f0f0f0;transform:scaleX(0.7439)">tâches</div>
<div class="t" style="left:1116.30px;top:289.68px;font-size:15.65px;font-weight:bold;color:#f4f4f4;transform:scaleX(0.7580)">Upscale</div>
<div class="t" style="left:324.52px;top:669.84px;font-size:20.91px;font-weight:bold;color:#f2f2f2;transform:scaleX(0.7811)">Récent</div>
<div class="t" style="left:1354.70px;top:671.17px;font-size:17.07px;font-weight:normal;color:#e8e8e8;transform:scaleX(0.8155);-webkit-text-stroke:.35px #e8e8e8">Voir tous les fichiers</div>
<div class="t" style="left:337.59px;top:920.64px;font-size:17.92px;font-weight:bold;color:#f0f0f0;transform:scaleX(0.7144)">Image4</div>
<div class="t" style="left:357.30px;top:950.46px;font-size:15.08px;font-weight:normal;color:#9c9c9c;transform:scaleX(0.7552);-webkit-text-stroke:.35px #9c9c9c">Sur l’ordinateur</div>
<div class="t" style="left:540.09px;top:920.64px;font-size:17.92px;font-weight:bold;color:#f0f0f0;transform:scaleX(0.7144)">Image3</div>
<div class="t" style="left:559.80px;top:950.46px;font-size:15.08px;font-weight:normal;color:#9c9c9c;transform:scaleX(0.7552);-webkit-text-stroke:.35px #9c9c9c">Sur l’ordinateur</div>
<div class="t" style="left:743.79px;top:920.64px;font-size:17.92px;font-weight:bold;color:#f0f0f0;transform:scaleX(0.7136)">Image 3</div>
<div class="t" style="left:763.50px;top:950.46px;font-size:15.08px;font-weight:normal;color:#9c9c9c;transform:scaleX(0.7552);-webkit-text-stroke:.35px #9c9c9c">Sur l’ordinateur</div>
<div class="t" style="left:946.78px;top:920.64px;font-size:17.92px;font-weight:bold;color:#f0f0f0;transform:scaleX(0.7212)">Image 2</div>
<div class="t" style="left:966.50px;top:950.46px;font-size:15.08px;font-weight:normal;color:#9c9c9c;transform:scaleX(0.7552);-webkit-text-stroke:.35px #9c9c9c">Sur l’ordinateur</div>
<div class="t" style="left:1148.83px;top:920.64px;font-size:17.92px;font-weight:bold;color:#f0f0f0;transform:scaleX(0.6725)">Image 1</div>
<div class="t" style="left:1168.50px;top:950.46px;font-size:15.08px;font-weight:normal;color:#9c9c9c;transform:scaleX(0.7552);-webkit-text-stroke:.35px #9c9c9c">Sur l’ordinateur</div>
<div class="t" style="left:1351.83px;top:920.64px;font-size:17.92px;font-weight:bold;color:#f0f0f0;transform:scaleX(0.6725)">Image 1</div>
<div class="t" style="left:1371.50px;top:950.46px;font-size:15.08px;font-weight:normal;color:#9c9c9c;transform:scaleX(0.7552);-webkit-text-stroke:.35px #9c9c9c">Sur l’ordinateur</div>

<div class="a" style="left:745px;top:263px;width:83px;height:366px;background:linear-gradient(to right,rgba(38,38,38,0),rgba(38,38,38,.4) 45%,rgba(38,38,38,.85) 80%,rgba(38,38,38,1) 100%)"></div>
<div class="a" style="left:1485px;top:263px;width:61px;height:366px;background:linear-gradient(to right,rgba(38,38,38,0),rgba(38,38,38,.5) 60%,rgba(38,38,38,.95) 100%)"></div>
<svg style="left:0;top:0" width="1600" height="600">
<ellipse cx="805.6" cy="446.4" rx="16.5" ry="20" fill="#222" fill-opacity=".9" stroke="#555" stroke-width="1"/>
<path d="M802.5 439.5 L808 446.4 L802.5 453.3" fill="none" stroke="#f0f0f0" stroke-width="2.2" stroke-linecap="round" stroke-linejoin="round"/>
<ellipse cx="1522.6" cy="446.2" rx="17" ry="20" fill="#2a2a2a" fill-opacity=".92" stroke="#555" stroke-width="1"/>
<path d="M1519.5 439.3 L1525 446.2 L1519.5 453.1" fill="none" stroke="#f0f0f0" stroke-width="2.2" stroke-linecap="round" stroke-linejoin="round"/>
</svg>
</body></html>
